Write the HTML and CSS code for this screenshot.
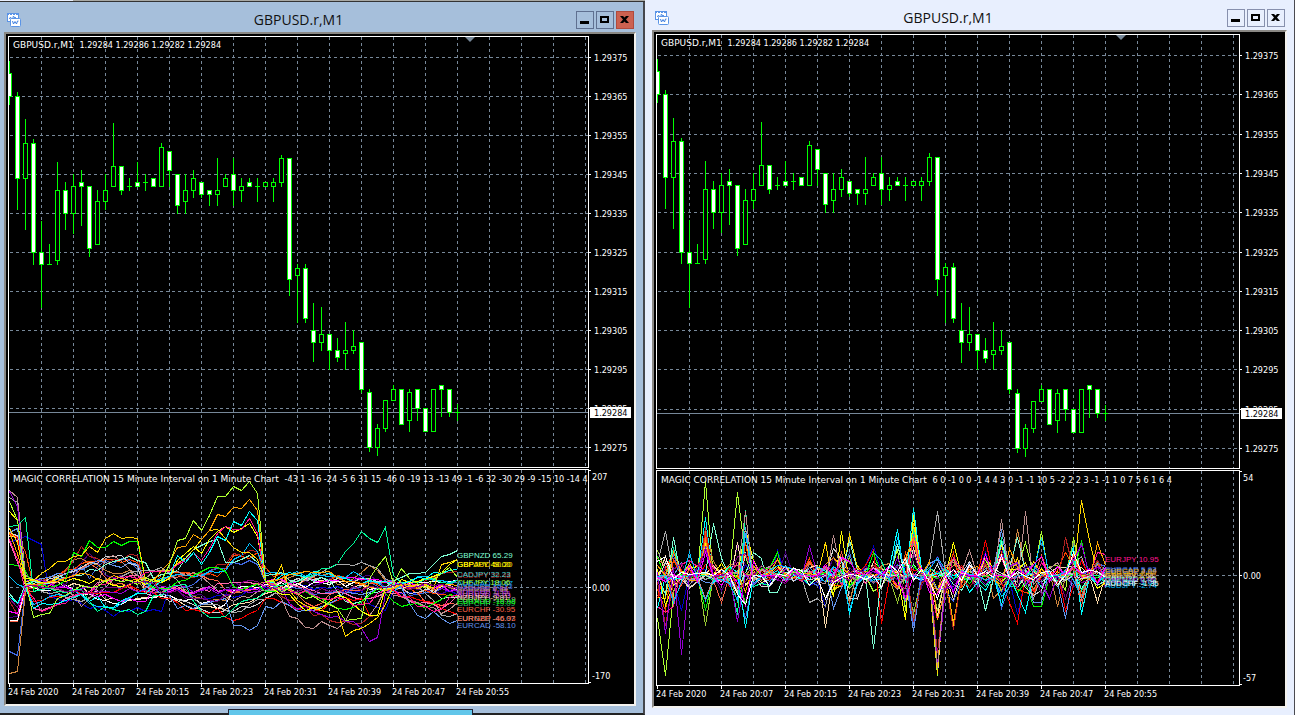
FILE: index.html
```html
<!DOCTYPE html>
<html lang="en">
<head>
  <meta charset="UTF-8">
  <meta name="viewport" content="width=device-width, initial-scale=1.0">
  <title>GBPUSD.r,M1</title>
  <link rel="stylesheet" href="styles.css">
</head>
<body>
  <svg class="defs" width="0" height="0">
    <symbol id="chartIcon" viewBox="0 0 14 14">
      <rect x="0.5" y="0.5" width="11" height="8" fill="#fff" stroke="#5b94e6"/>
      <path d="M0 1.5h12" stroke="#5b94e6" stroke-dasharray="2 1"/>
      <path d="M2 5.5h1v-1h1v1h2v-2h1v1h2" fill="none" stroke="#5b94e6"/>
      <rect x="3.5" y="5.5" width="10" height="8" rx="1" fill="#fff" stroke="#5b94e6"/>
      <path d="M5.500 8l1 3 1.500-2.500 1.500 2.500 1-3h1" fill="none" stroke="#3f7fe0"/>
    </symbol>
    <symbol id="minIcon" viewBox="0 0 16 16">
      <path d="M3 9h9v3H3z"/>
    </symbol>
    <symbol id="maxIcon" viewBox="0 0 16 16">
      <path d="M3 4h9v7H3zM5 6v3h5V6z" fill-rule="evenodd"/>
    </symbol>
    <symbol id="closeIcon" viewBox="0 0 16 16">
      <path d="M3 4h3l1.500 1.500L9 4h3L9 7.500l3 3.500H9L7.500 9.500 6 11H3l3-3.500z"/>
    </symbol>
  </svg>

  <main class="desktop">
    <section class="column">
      <div class="strip"></div>
      <div class="window active">
        <header class="titlebar">
          <svg class="icon"><use href="#chartIcon"/></svg>
          <h1>GBPUSD.r,M1</h1>
          <div class="buttons">
            <button type="button" aria-label="Minimize"><svg><use href="#minIcon"/></svg></button>
            <button type="button" aria-label="Maximize"><svg><use href="#maxIcon"/></svg></button>
            <button type="button" class="close" aria-label="Close"><svg><use href="#closeIcon"/></svg></button>
          </div>
        </header>
        <div class="client" id="leftChart">
          <div class="plot"><svg class="price"></svg></div>
          <svg class="scale priceScale"></svg>
          <div class="plot"><svg class="corr"></svg></div>
          <svg class="scale corrScale"></svg>
          <div class="times"></div>
        </div>
      </div>
      <div class="taskItem"></div>
    </section>

    <section class="column">
      <div class="window">
        <header class="titlebar">
          <svg class="icon"><use href="#chartIcon"/></svg>
          <h1>GBPUSD.r,M1</h1>
          <div class="buttons">
            <button type="button" aria-label="Minimize"><svg><use href="#minIcon"/></svg></button>
            <button type="button" aria-label="Maximize"><svg><use href="#maxIcon"/></svg></button>
            <button type="button" aria-label="Close"><svg><use href="#closeIcon"/></svg></button>
          </div>
        </header>
        <div class="client" id="rightChart">
          <div class="plot"><svg class="price"></svg></div>
          <svg class="scale priceScale"></svg>
          <div class="plot"><svg class="corr"></svg></div>
          <svg class="scale corrScale"></svg>
          <div class="times"></div>
        </div>
      </div>
    </section>
  </main>

  <script src="charts.js"></script>
</body>
</html>
```
FILE: styles.css
```css
html, body {
  margin: 0;
  padding: 0;
  height: 100%;
  overflow: hidden;
  background-color: #e8effe;
}

.defs {
  position: absolute;
}

.desktop {
  display: grid;
  grid-template-columns: 645fr 650fr;
  height: 100vh;
}

.column {
  display: flex;
  flex-direction: column;
  position: relative;
  min-width: 0;
  min-height: 0;
}

.strip {
  height: 1px;
  border-bottom: 1px solid #333;
  background: linear-gradient(to right, #e8effe 73px, #a8a8a4 73px);
}

.window {
  display: flex;
  flex-direction: column;
  flex: 1;
  min-height: 0;
  box-sizing: border-box;
  padding: 0 7px 7px 7px;
  background-color: #e8effe;
  border-right: 1px solid #4a4a50;
}

.window.active {
  padding-left: 4px;
  background-color: #a6bfdb;
  border-right: 2px solid #45474d;
  border-bottom: 2px solid #222;
}

.titlebar {
  display: flex;
  align-items: center;
  box-sizing: border-box;
  height: 30px;
  padding: 9px 2px 3px 3px;
}

.titlebar h1 {
  flex: 1;
  margin: 0;
  font: 400 14px/18px "Open Sans", "Noto Sans", sans-serif;
  text-align: center;
  color: #111;
}

.icon {
  width: 14px;
  height: 14px;
}

.buttons {
  display: flex;
  gap: 2px;
}

.buttons button {
  width: 18px;
  height: 18px;
  padding: 0;
  border: 1px solid #8790ad;
  background-color: transparent;
}

.buttons svg {
  display: block;
  width: 16px;
  height: 16px;
}

.active .buttons button {
  border-color: #5f7090;
}

.active .buttons .close {
  background-color: #cc6150;
  border-color: #b04a3c;
}

.client {
  display: grid;
  grid-template-columns: 1fr 45px;
  grid-template-rows: 433fr 215fr 20px;
  flex: 1;
  min-height: 0;
  padding: 2px 0 0 2px;
  background-color: #000;
  border: 2px solid #f4f2ee;
  border-top-color: #8a8884;
  border-left-color: #8a8884;
}

.plot {
  min-width: 0;
  min-height: 0;
  overflow: hidden;
  border: 1px solid #fff;
}

/* dark line between the two panes */
.plot:first-child {
  margin-bottom: 1px;
}

.plot svg, .scale {
  display: block;
  width: 100%;
  height: 100%;
}

.scale {
  min-height: 0;
}

.times {
  display: flex;
  grid-column: 1 / 3;
  overflow: hidden;
}

.times span {
  flex: none;
  width: 64px;
  background: linear-gradient(#fff, #fff) 1px 0 / 1px 3px no-repeat;
}

.times span, .client text {
  font-family: "DejaVu Sans Condensed", "DejaVu Sans", sans-serif;
  font-size: 9px;
  line-height: 17px;
  white-space: pre;
  color: #fff;
  fill: #fff;
}

.client .name {
  font-family: "DejaVu Sans", sans-serif;
}

.client text.tag {
  font-family: "Liberation Sans", Arial, sans-serif;
  font-size: 8px;
}

.client text.now {
  fill: #000;
}

.grid {
  stroke: #778899;
  stroke-dasharray: 3 3;
  shape-rendering: crispEdges;
}

.bid {
  stroke: #778899;
  shape-rendering: crispEdges;
}

.tick {
  stroke: #fff;
  shape-rendering: crispEdges;
}

.shift {
  fill: #778899;
}

.candle {
  stroke: #00ff00;
  fill: #000;
  shape-rendering: crispEdges;
}

.candle.down {
  fill: #fff;
}

.series {
  fill: none;
  shape-rendering: crispEdges;
}

.taskItem {
  position: absolute;
  left: 228px;
  bottom: 0;
  width: 243px;
  height: 5px;
  border: 1px solid #223;
  border-bottom: none;
  background-color: #62c6ea;
}
```
FILE: charts.js
```js
const STEP = 8;
const BARS = 57;

// high, open, close, low in points above 1.29000
const candles = [
  [374,371,365,363],[366,365,344,336],[359,344,353,331],[354,353,325,322],[333,325,322,311],
  [327,322,322,322],[348,323,341,322],[343,341,335,331],[345,335,342,330],[346,343,342,332],
  [342,342,326,324],[341,327,338,327],[345,338,341,336],[358,342,347,342],[347,347,341,340],
  [344,342,342,341],[348,343,342,342],[345,343,343,341],[344,344,342,342],[353,342,352,342],
  [351,351,346,342],[345,345,337,335],[345,338,341,335],[346,341,344,339],[343,343,340,339],
  [341,341,340,337],[349,340,341,337],[345,342,344,342],[349,345,341,337],[344,341,342,338],
  [344,343,342,342],[344,342,342,338],[343,342,343,342],[344,342,343,338],[350,343,349,342],
  [349,349,318,314],[322,319,321,307],[322,321,308,307],[312,305,302,297],[311,302,304,300],
  [304,304,300,295],[303,300,298,297],[307,299,300,295],[305,300,301,299],[302,302,290,289],
  [290,289,275,274],[281,275,280,273],[287,280,287,279],[291,287,290,287],[290,290,281,281],
  [290,282,289,279],[290,290,285,282],[285,285,279,279],[290,279,290,279],[291,291,290,283],
  [290,290,284,283],[286,284,284,282]
];

const times = ['24 Feb 2020', '24 Feb 20:07', '24 Feb 20:15', '24 Feb 20:23',
  '24 Feb 20:31', '24 Feb 20:39', '24 Feb 20:47', '24 Feb 20:55'];

// cumulative correlation: colour, then bar/value keyframes
const trends = [
  ['#0000cd', '0:80 1:84 2:91 3:83 4:76 5:-14 6:-21 8:-21 10:-37 12:-40 13:-51 14:-41 19:-42 20:-2 24:-19 27:-12 28:-18 32:0 44:-6 45:-30 46:-35 47:-40 48:-5 56:-12'],
  ['#4b0082', '0:-54 1:-52 2:4 7:5 9:45 10:60 11:45 12:22 17:8 20:-6 26:-25 28:10 32:-5 44:20 46:12 48:0 56:-8'],
  ['#4169e1', '0:-114 1:-121 2:0 8:20 9:38 10:15 12:47 15:47 17:5 20:-8 28:45 29:40 30:47 31:40 32:8 38:-12 48:10 50:-15 56:8'],
  ['#cd853f', '0:-152 1:-149 2:-8 6:20 8:50 9:52 12:30 15:30 17:-5 20:0 26:-22 32:8 40:25 41:5 45:38 46:30 48:0 53:4 56:-6'],
  ['#ff6347', '0:-60 1:-60 2:-5 6:10 10:42 12:18 17:-8 20:18 24:22 28:-10 32:6 36:-12 38:-34 41:-8 48:10 53:-28 56:-31'],
  ['#ff4500', '0:93 1:88 2:63 3:2 6:20 12:50 16:45 17:0 20:25 26:20 28:57 29:54 30:52 31:62 32:36 33:20 34:25 35:0 41:22 47:-3 56:-14'],
  ['#b22222', '0:-25 1:-48 2:0 7:28 8:48 9:72 10:54 12:40 16:57 17:-8 20:16 24:24 27:40 28:60 29:57 30:66 31:63 32:10 38:-50 40:-58 42:-61 44:-64 46:-49 47:0 51:0 54:25 55:26 56:29'],
  ['#ffdead', '0:90 1:88 2:5 6:10 14:-24 20:-20 22:-32 26:-38 28:-30 32:-10 38:14 48:0 56:-3'],
  ['#ffffff', '0:-58 1:-58 2:4 8:-3 13:-28 17:-20 21:-22 24:-28 27:-31 28:-6 32:5 40:6 48:-2 56:12'],
  ['#d3d3d3', '0:95 1:92 2:0 9:35 13:55 16:38 17:-10 21:-22 25:-44 28:-42 30:-36 32:-20 36:15 46:10 48:0 56:-18'],
  ['#a9a9a9', '0:160 1:150 2:6 8:-22 11:-12 14:20 18:30 19:35 24:-30 28:-44 32:-22 38:20 41:40 42:41 43:38 44:44 45:38 46:34 47:15 52:-10 54:-49 56:-46'],
  ['#ff00ff', '0:-43 1:-46 2:2 8:-3 14:-25 17:-24 18:-3 24:-4 31:-4 32:10 41:13 47:8 56:-1'],
  ['#ff69b4', '0:81 1:45 2:10 3:-37 5:-36 7:-19 12:10 16:22 18:-6 24:-2 30:8 35:5 44:-22 48:-10 54:-38 56:-14'],
  ['#ff0000', '0:95 1:89 2:8 3:-25 8:-5 16:-4 20:-19 22:-40 24:-43 26:-37 28:-59 29:-55 30:-46 31:-40 32:-20 39:-40 40:-28 44:-20 45:-49 46:-49 47:-2 52:-25 53:-26 54:-37 55:-43 56:-47'],
  ['#6495ed', '0:98 1:105 2:5 8:32 12:45 16:40 17:10 20:-14 21:-37 24:-31 27:-20 28:-68 29:-67 30:-76 31:-68 32:-33 33:-37 34:-25 36:-43 38:-40 42:-8 49:0 50:-28 51:-50 52:-55 53:-43 54:-55 55:-64 56:-58'],
  ['#00bfff', '0:20 1:6 2:0 3:-30 8:-5 11:-34 13:-38 15:-20 20:20 24:22 27:30 28:50 29:57 30:78 31:63 32:25 38:24 44:20 48:-8 51:20 56:13'],
  ['#bc8f8f', '0:172 1:160 2:22 4:2 8:-12 9:-34 11:0 12:52 13:57 14:46 17:16 19:30 24:20 28:-24 33:-5 34:-19 35:-51 36:-55 37:-70 38:-73 39:-61 40:-67 41:-73 42:-61 43:-31 44:-43 45:-49 47:-2 54:-46 56:-27'],
  ['#9400d3', '0:169 1:143 2:10 6:0 14:-10 20:0 24:-5 34:-2 35:-28 38:-43 41:-52 42:-60 43:-61 44:-73 45:-96 46:-89 47:-11 48:2 56:-5'],
  ['#00fa9a', '0:107 1:110 2:124 3:-8 5:-2 9:-4 10:-25 11:-42 12:-34 14:-42 17:-43 18:-15 22:5 23:-25 24:-43 26:-54 27:-52 28:-37 32:-8 38:22 40:34 41:42 42:64 43:78 44:99 45:86 46:80 47:106 48:22 49:8 56:13'],
  ['#7fffd4', '0:-10 1:-28 2:5 8:22 12:40 14:50 17:45 18:15 21:30 22:51 24:75 25:82 26:84 27:45 28:45 29:50 30:57 31:45 32:22 40:12 42:-25 44:-24 48:12 50:25 52:27 53:40 54:54 55:58 56:65'],
  ['#00ff00', '0:40 1:38 2:30 3:-2 7:13 8:62 9:54 10:83 11:71 12:71 13:81 14:75 15:81 16:82 17:10 20:-2 21:10 22:13 23:22 24:29 25:35 26:35 27:28 28:1 35:-2 39:-19 41:-37 42:-39 44:-25 46:-2 49:-34 50:-31 51:-28 52:-37 54:-22 56:-16'],
  ['#ffd700', '0:104 1:80 2:10 8:54 9:57 10:72 11:62 12:87 13:96 14:86 15:88 16:86 17:13 20:30 24:84 25:100 26:103 27:87 28:70 29:62 31:50 32:10 33:12 34:38 35:-5 38:-38 41:-43 42:-86 43:-77 44:-73 45:-64 47:-31 48:4 53:-2 54:40 55:45 56:50'],
  ['#ffff00', '0:134 1:119 2:16 8:15 12:10 17:6 20:16 21:48 22:60 23:72 24:60 25:84 26:99 27:107 28:98 29:104 30:113 31:90 32:10 36:-28 37:-40 39:-38 41:-14 45:-50 46:-50 47:0 53:20 54:26 55:40 56:49'],
  ['#ff1493', '0:85 1:50 2:-5 4:-42 6:-30 9:-10 15:20 20:28 21:40 23:62 24:48 25:69 26:96 27:107 28:102 29:103 30:122 31:96 32:10 40:-22 44:-30 48:-3 53:-42 56:-12'],
  ['#00ffff', '0:-16 1:-28 2:0 3:-37 4:-28 9:-12 13:-35 17:-10 19:10 20:22 21:57 22:45 23:62 24:40 25:62 26:90 27:83 28:117 29:110 30:134 31:119 32:10 36:22 40:24 48:5 52:16 55:30 56:32'],
  ['#ffa500', '0:98 1:60 2:5 8:22 14:16 18:10 20:45 21:71 22:72 23:94 24:84 25:101 26:129 27:126 28:142 29:139 30:155 31:137 32:10 40:28 42:10 48:-2 56:4'],
  ['#adff2f', '0:152 1:119 2:13 3:-54 4:-47 5:-46 6:-19 8:-5 12:13 18:10 19:13 20:40 21:83 22:87 23:118 24:100 25:128 26:161 27:161 28:179 29:172 30:188 31:166 32:10 40:-30 42:-58 44:-55 45:16 46:37 47:54 48:7 49:34 50:16 52:-2 54:25 55:36 56:18'],
  ['#800080', '0:-20 1:-35 2:2 8:-8 16:8 24:-20 26:-24 30:12 32:-4 40:-8 48:4 56:-2']
];

// per-bar readings: the tall spikes of each pair
const spikes = [
  ['#adff2f', '0:-22 1:-52 2:-8 6:49 10:43 31:-18 32:26 35:-52 48:23 52:20 46:17'],
  ['#9acd32', '0:13 6:-26 32:-20 30:-14 52:18'],
  ['#ffd700', '2:14 21:17 24:22 32:27 35:-51 37:-26 53:39 54:18'],
  ['#0000cd', '3:-18 15:13 21:-16 27:15 41:12 45:-20 53:8'],
  ['#4b0082', '16:12 10:15 35:10 43:15'],
  ['#cd853f', '6:23 32:22 45:24 50:-16 42:-12 24:-14'],
  ['#ff6347', '8:-14 6:20 23:12 32:18 53:-16'],
  ['#ff4500', '6:22 1:-18 31:12 37:12 43:12 51:12'],
  ['#ffdead', '10:17 21:-27 55:-14 32:14'],
  ['#a9a9a9', '1:23 19:-14 20:-12 35:33 25:-12 47:-12'],
  ['#ff0000', '27:13 28:-25 41:18 45:-25 44:-14 51:-18 0:-12'],
  ['#ffff00', '6:16 11:24 23:23 31:-23 32:31 37:17 12:8'],
  ['#6495ed', '11:25 22:-17 32:-29 43:24 51:-22 47:-14 48:-14'],
  ['#4169e1', '11:-22 6:18 24:12 43:-17 32:-26'],
  ['#00fa9a', '11:34 2:14 10:-20 32:24 43:20 28:8 27:12'],
  ['#7fffd4', '2:20 7:27 8:9 12:12 13:9 14:-9 15:-9 27:-38 30:16 41:-18 45:20 24:18'],
  ['#00ff00', '0:10 15:12 6:-18 27:12 47:-16 48:-16 53:18 11:-14'],
  ['#ff1493', '0:-16 1:-19 2:-16 6:14 56:11 55:12'],
  ['#00ffff', '0:-17 6:30 11:-27 24:-20 30:24 32:35 43:-15 46:-19 53:-20 52:15 39:-9'],
  ['#ffa500', '2:12 6:18 32:20 37:-24 55:17 44:14'],
  ['#b22222', '1:-26 6:25 32:-24 37:-28 35:-40 51:20'],
  ['#9400d3', '1:-30 3:-41 10:-24 19:15 35:-46 53:16 49:-12'],
  ['#d3d3d3', '22:14 25:-12 24:-12 46:-6'],
  ['#800080', '5:4 10:10 32:12 40:-7'],
  ['#00bfff', '4:12 2:-14 30:20 48:19 24:-18 53:-12'],
  ['#bc8f8f', '11:33 22:21 43:29 46:33 39:13 35:-48'],
  ['#ff00ff', '6:12 21:6 35:-10'],
  ['#ffffff', '1:10 21:-12 35:-12 56:-1']
];
const up = [12,14,16,9,10,6,26,12,8,8,12,30,9,7,6,11,8,5,4,12,7,10,14,12,16,8,7,12,8,
  8,18,12,28,8,10,12,7,12,7,9,8,14,8,22,10,14,12,10,16,6,10,8,18,14,6,13,8];
const down = [16,20,18,6,9,5,20,6,10,8,18,22,8,8,8,6,6,4,4,7,7,20,14,9,16,8,5,10,14,
  5,9,18,22,8,12,38,10,18,12,8,6,10,4,14,8,18,12,13,12,4,9,16,9,16,4,9,8];

const leftTags = [
  ['GBPNZD', 65.29, '#7fffd4'], ['GBPAUD', 50.20, '#ffd700'], ['GBPJPY', 49.00, '#ffff00'],
  ['USDJPY', 29.48, '#b22222'], ['CADJPY', 32.23, '#48d1cc'], ['AUDCAD', 15.67, '#00bfff'],
  ['CHFJPY', 18.06, '#adff2f'], ['NZDCAD', 10.13, '#4169e1'], ['NZDUSD', 6.34, '#bc8f8f'],
  ['CADCHF', 4.51, '#9932cc'], ['AUDCHF', 1.35, '#bc8f8f'], ['AUDUSD', -1.01, '#9400d3'],
  ['AUDNZD', -5.23, '#da70d6'], ['NZDJPY', -9.81, '#ffdead'], ['EURUSD', -13.19, '#a9a9a9'],
  ['GBPCHF', -19.09, '#3cb371'], ['EURAUD', -16.06, '#00ff00'], ['EURCHF', -30.95, '#ff6347'],
  ['EURNZD', -46.07, '#a9a9a9'], ['EURGBP', -46.93, '#ff6347'], ['EURCAD', -58.10, '#6495ed']
];
const rightTags = [
  ['EURJPY', 10.95, '#ff1493'], ['EURCAD', 5.93, '#4169e1'], ['GBPCAD', 5.04, '#6495ed'],
  ['EURGBP', 4.66, '#daa520'], ['EURCHF', 3.94, '#cd853f'], ['GBPJPY', 2.51, '#ffd700'],
  ['CADJPY', 1.95, '#bc8f8f'], ['GBPUSD', 1.05, '#d3d3d3'], ['GBPNZD', 0.42, '#7fffd4'],
  ['CADCHF', -0.00, '#9400d3'], ['USDJPY', -1.04, '#48d1cc'], ['AUDJPY', -2.74, '#00bfff'],
  ['AUDCHF', -1.35, '#ffffff']
];

function draw(parent, name, attrs, text) {
  const el = document.createElementNS('http://www.w3.org/2000/svg', name);
  for (const key in attrs) el.setAttribute(key, attrs[key]);
  if (text !== undefined) el.textContent = text;
  parent.appendChild(el);
  return el;
}

function line(svg, cls, x1, y1, x2, y2) {
  draw(svg, 'path', { class: cls, d: `M${x1} ${y1}L${x2} ${y2}` });
}

function caption(svg, y, name, values) {
  const text = draw(svg, 'text', { x: 4, y: y });
  draw(text, 'tspan', { class: 'name' }, name + '  ');
  draw(text, 'tspan', {}, values);
}

function noise(i, s) {
  const r = Math.sin(i * 12.9898 + s * 78.233) * 43758.5453;
  return (r - Math.floor(r)) * 2 - 1;
}

function parse(keys) {
  return keys.split(' ').map(k => k.split(':').map(Number));
}

// Straight runs between keyframes, with a little jitter on the bars in between
function trendValues(keys, s) {
  const points = parse(keys);
  const values = [];
  for (let n = 0; n < points.length - 1; n++) {
    const [a, va] = points[n];
    const [b, vb] = points[n + 1];
    for (let i = a; i < b; i++) {
      values[i] = va + (vb - va) * (i - a) / (b - a) + (i > a ? noise(i, s) * 7 : 0);
    }
  }
  values.push(points[points.length - 1][1]);
  return values;
}

function spikeValues(keys, s) {
  const values = [];
  for (let i = 0; i < BARS; i++) {
    const r = noise(i, s);
    values[i] = Math.abs(r) * r * (r > 0 ? up[i] : down[i]) * 0.8;
  }
  parse(keys).forEach(([i, v]) => { values[i] = v; });
  return values;
}

function verticals(svg, width, height) {
  for (let x = 32; x < width; x += 32) line(svg, 'grid', x + 0.5, 0, x + 0.5, height);
}

function drawPrice(root) {
  const svg = root.querySelector('.price');
  const scale = root.querySelector('.priceScale');
  const width = svg.clientWidth;
  const height = svg.clientHeight;
  const y = p => Math.round(20 + (375 - p) * (height - 40) / 100) + 0.5;

  verticals(svg, width, height);
  for (let p = 375; p >= 275; p -= 10) {
    line(svg, 'grid', 1, y(p), width, y(p));
    line(scale, 'tick', 0, y(p) + 1, 2, y(p) + 1);
    draw(scale, 'text', { x: 5, y: y(p) + 4 }, '1.29' + p);
  }
  line(svg, 'bid', 0, y(284), width, y(284));
  draw(scale, 'rect', { x: 1, y: y(284) - 4.5, width: 41, height: 11, fill: '#fff' });
  draw(scale, 'text', { x: 5, y: y(284) + 4, class: 'now' }, '1.29284');

  candles.forEach(([high, open, close, low], i) => {
    const x = i * STEP + 0.5;
    const top = y(Math.max(open, close));
    const bottom = y(Math.min(open, close));
    line(svg, 'candle', x, y(high) - 0.5, x, y(low) + 0.5);
    if (open === close) {
      line(svg, 'candle', x - 2.5, top, x + 2.5, top);
    } else {
      draw(svg, 'rect', { class: close < open ? 'candle down' : 'candle',
        x: x - 2, y: top, width: 4, height: bottom - top });
    }
  });

  const m = width - 118;
  draw(svg, 'path', { class: 'shift', d: `M${m - 5} 0h10l-5 5z` });
  caption(svg, 11, 'GBPUSD.r,M1', '1.29284 1.29286 1.29282 1.29284');
}

function drawCorr(root, opt) {
  const svg = root.querySelector('.corr');
  const scale = root.querySelector('.corrScale');
  const width = svg.clientWidth;
  const height = svg.clientHeight;
  const y = v => Math.round((opt.max - v) * height / (opt.max - opt.min)) + 0.5;

  verticals(svg, width, height);
  line(svg, 'grid', 1, y(0), width, y(0));
  opt.series.forEach(([colour, keys], s) => {
    const points = opt.values(keys, s).map((v, i) => `${i * STEP + 0.5},${y(v)}`);
    draw(svg, 'polyline', { class: 'series', stroke: colour, points: points.join(' ') });
  });
  opt.tags.forEach(([pair, value, colour]) => {
    draw(svg, 'text', { class: 'tag', x: 448, y: y(value) + 7, style: 'fill: ' + colour },
      pair + ' ' + value.toFixed(2));
  });
  caption(svg, 12, 'MAGIC CORRELATION 15 Minute Interval on 1 Minute Chart', opt.readings);

  line(scale, 'tick', 0, 1.5, 2, 1.5);
  line(scale, 'tick', 0, y(0) + 1, 2, y(0) + 1);
  line(scale, 'tick', 0, height + 0.5, 2, height + 0.5);
  draw(scale, 'text', { x: 3, y: 11 }, opt.max);
  draw(scale, 'text', { x: 3, y: y(0) + 4 }, '0.00');
  draw(scale, 'text', { x: 3, y: height - 3 }, opt.min);
}

function drawTimes(root) {
  const row = root.querySelector('.times');
  times.forEach(function(label) {
    const span = document.createElement('span');
    span.textContent = label;
    row.appendChild(span);
  });
}

const left = document.getElementById('leftChart');
const right = document.getElementById('rightChart');

[left, right].forEach(function(root) {
  drawPrice(root);
  drawTimes(root);
});

drawCorr(left, {
  max: 207, min: -170, series: trends, values: trendValues, tags: leftTags,
  readings: '-43 1 -16 -24 -5 6 31 15 -46 0 -19 13 -13 49 -1 -6 32 -30 29 -9 -15 10 -14 4'
});
drawCorr(right, {
  max: 54, min: -57, series: spikes, values: spikeValues, tags: rightTags,
  readings: '6 0 -1 0 0 -1 4 4 3 0 -1 -1 10 5 -2 2 2 3 -1 -1 1 0 7 5 6 1 6 4'
});
```
